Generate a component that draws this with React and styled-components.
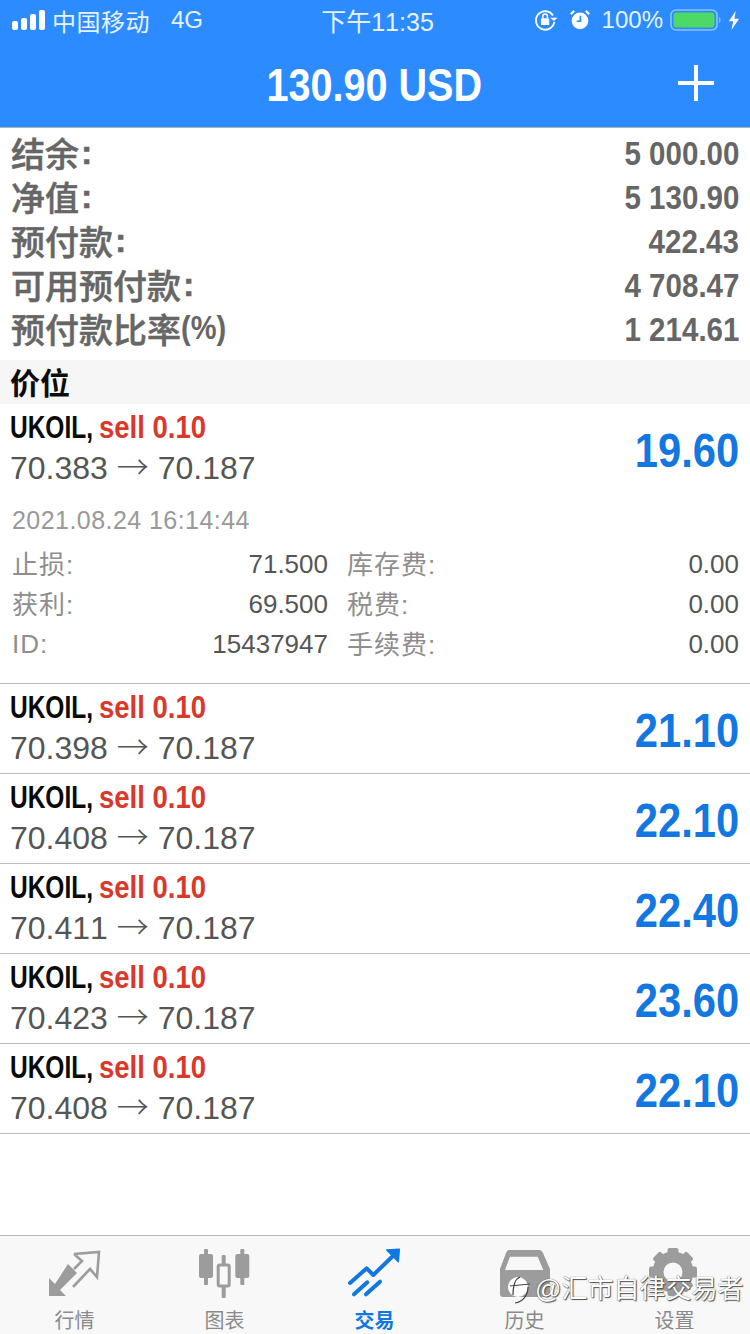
import React from 'react';
import styled, { createGlobalStyle } from 'styled-components';

const GlobalStyle = createGlobalStyle`
  html, body {
    margin: 0;
    padding: 0;
    background: #fff;
  }
  body {
    font-family: "Liberation Sans", "Noto Sans CJK SC", sans-serif;
  }
`;

const Page = styled.div`
  position: relative;
  width: 750px;
  height: 1334px;
  overflow: hidden;
  display: flex;
  flex-direction: column;
  background: #fff;
`;

const Header = styled.header`
  height: 128px;
  background: #2c8cff;
  color: #fff;
  flex: none;
  border-bottom: 1px solid #b4b4b4;
  box-sizing: border-box;
`;

const StatusBar = styled.div`
  height: 40px;
  display: grid;
  grid-template-columns: 1fr auto 1fr;
  align-items: center;
  padding: 0 10px 0 12px;
  font-size: 24px;
  color: #e6f1ff;
`;

const StatusLeft = styled.div`
  display: flex;
  align-items: center;
`;

const Carrier = styled.span`
  margin-left: 7px;
  letter-spacing: 0.5px;
`;

const Network = styled.span`
  margin-left: 21px;
`;

const Clock = styled.span`
  font-size: 25px;
  font-kerning: none;
  margin-left: 3px;
`;

const StatusRight = styled.div`
  display: flex;
  align-items: center;
  justify-content: flex-end;
`;

const Percent = styled.span`
  margin: 0 7px 0 12px;
`;

const TitleBar = styled.div`
  height: 87px;
  position: relative;
  display: flex;
  align-items: center;
  justify-content: center;
`;

const Title = styled.div`
  font-size: 46px;
  font-weight: 700;
  transform: scaleX(0.86);
  margin: 2px 2px 0 0;
`;

const AddButton = styled.div`
  position: absolute;
  right: 36px;
  top: 25px;
  width: 36px;
  height: 36px;
  &::before, &::after {
    content: "";
    position: absolute;
    background: #fff;
  }
  &::before { left: 0; right: 0; top: 16px; height: 4px; }
  &::after { top: 0; bottom: 0; left: 16px; width: 4px; }
`;

const Summary = styled.section`
  padding: 4px 11px 8px 11px;
  flex: none;
`;

const SummaryRow = styled.div`
  height: 44px;
  display: flex;
  align-items: center;
  justify-content: space-between;
  color: #666;
`;

const SummaryLabel = styled.span`
  display: flex;
  align-items: center;
  font-size: 34px;
  font-weight: 500;
  -webkit-text-stroke: 0.5px #666;
  margin-bottom: 4px;
`;

const Colon = styled.span`
  font-weight: 700;
  margin-left: 2px;
`;

const Percentage = styled.span`
  display: inline-block;
  width: 45px;
  font-size: 33px;
  font-weight: 700;
  -webkit-text-stroke: 0;
  transform: scaleX(0.88);
  transform-origin: left center;
`;

const SummaryValue = styled.span`
  display: inline-block;
  font-weight: 700;
  transform: scaleX(0.895);
  transform-origin: right center;
  font-size: 33px;
`;

const SectionHead = styled.div`
  height: 44px;
  box-sizing: border-box;
  background: #f6f6f6;
  display: flex;
  align-items: center;
  padding: 0 0 2px 10px;
  font-size: 30px;
  font-weight: 700;
  color: #0c0c0c;
  flex: none;
`;

const Position = styled.div`
  height: 90px;
  box-sizing: border-box;
  padding: 3px 11px 0 10px;
  display: flex;
  justify-content: space-between;
  align-items: center;
  border-bottom: 1px solid ${p => (p.$open ? 'transparent' : '#bcbcbc')};
  flex: none;
`;

const PositionInfo = styled.div`
  display: flex;
  flex-direction: column;
  gap: 4px;
  margin-top: -5px;
`;

const Symbol = styled.div`
  display: flex;
  font-size: 31px;
  line-height: 36px;
  font-weight: 700;
  white-space: nowrap;
`;

const SymbolName = styled.span`
  display: inline-block;
  width: 89px;
  color: #0a0a0a;
  transform: scaleX(0.79);
  transform-origin: left center;
`;

const Side = styled.span`
  display: inline-block;
  color: #d9392b;
  transform: scaleX(0.887);
  transform-origin: left center;
`;

const Prices = styled.div`
  font-size: 32px;
  line-height: 36px;
  color: #555;
  font-kerning: none;
  white-space: nowrap;
`;

const Arrow = styled.span`
  font-family: "Noto Sans CJK SC", sans-serif;
  font-weight: 300;
  line-height: 0;
`;

const Profit = styled.div`
  font-size: 48px;
  font-weight: 700;
  color: #1277e1;
  transform: scaleX(0.868);
  transform-origin: right center;
  margin-top: 0;
`;

const Details = styled.div`
  height: 194px;
  box-sizing: border-box;
  padding: 15px 11px 0 12px;
  border-bottom: 1px solid #bcbcbc;
  margin-top: -4px;
  flex: none;
`;

const DateLine = styled.div`
  font-size: 25px;
  line-height: 30px;
  color: #999;
  letter-spacing: 0.45px;
  margin-bottom: 9px;
`;

const DetailGrid = styled.div`
  display: grid;
  grid-template-columns: 316px 1fr;
  grid-auto-rows: 40px;
  column-gap: 19px;
`;

const DetailCell = styled.div`
  display: flex;
  align-items: center;
  justify-content: space-between;
  font-size: 26px;
`;

const DetailLabel = styled.span`
  color: #8e8e8e;
  letter-spacing: 1px;
  margin-bottom: ${p => (p.$latin ? '0' : '4px')};
`;

const DetailValue = styled.span`
  color: #555;
`;

const Spacer = styled.div`
  flex: 1;
`;

const TabBar = styled.nav`
  height: 99px;
  flex: none;
  box-sizing: border-box;
  border-top: 1px solid #b9b9b9;
  background: #f8f8f8;
  display: grid;
  grid-template-columns: repeat(5, 1fr);
`;

const Tab = styled.div`
  display: flex;
  flex-direction: column;
  align-items: center;
  font-size: 20px;
  font-weight: ${p => (p.$active ? 700 : 400)};
`;

const TabIcon = styled.svg`
  width: 60px;
  height: 60px;
  margin-top: 8px;
  flex: none;
`;

const TabLabel = styled.span`
  line-height: 24px;
  margin: 5px 1px 0 0;
  color: ${p => (p.$active ? '#1277e1' : '#8a8a8a')};
`;

const Watermark = styled.div`
  position: absolute;
  left: 505px;
  top: 1269px;
  display: flex;
  align-items: center;
  font-size: 26px;
  line-height: 36px;
  color: #fff;
  text-shadow: 0 0 1px #333, 1px 1px 1px #555;
  white-space: nowrap;
`;

const WatermarkLogo = styled.svg`
  width: 30px;
  height: 40px;
  flex: none;
`;

const SignalBars = () => (
  <svg width="33" height="22" viewBox="0 0 33 22" fill="#fff">
    <rect x="0" y="12" width="6" height="9" rx="2" />
    <rect x="9" y="9" width="6" height="12" rx="2" />
    <rect x="18" y="5" width="6" height="16" rx="2" />
    <rect x="27" y="1" width="6" height="20" rx="2" />
  </svg>
);

const RotationLock = () => (
  <svg width="24" height="24" viewBox="0 0 26 26" fill="none" stroke="#fff">
    <path d="M22 15a10 10 0 1 1-1.500-7" strokeWidth="2" />
    <path d="M25.500 10.500l-4 3.500-4-3.500z" fill="#fff" stroke="none" />
    <rect x="7.500" y="11" width="9" height="7.500" rx="1" fill="#fff" stroke="none" />
    <path d="M9.500 11V9a2.500 2.500 0 0 1 5 0v2" strokeWidth="1.600" />
  </svg>
);

const Alarm = () => (
  <svg width="20" height="22" viewBox="0 0 24 26" style={{ marginLeft: 12 }}>
    <circle cx="12" cy="14" r="10" fill="#fff" />
    <path d="M12.500 8v6.500H8" fill="none" stroke="#2c8cff" strokeWidth="2" />
    <path d="M1 6l4-4M23 6l-4-4" stroke="#fff" strokeWidth="2.600" />
  </svg>
);

const Battery = () => (
  <svg width="52" height="24" viewBox="0 0 52 24">
    <rect x="1" y="2" width="46" height="20" rx="5" fill="none" stroke="#8cc1ff" strokeWidth="1.600" />
    <rect x="3.500" y="4.500" width="41" height="15" rx="3" fill="#4cd964" />
    <path d="M49 9c2 .5 2 5.500 0 6z" fill="#8cc1ff" />
  </svg>
);

const Bolt = () => (
  <svg width="12" height="19" viewBox="0 0 14 22" style={{ marginLeft: 6 }}>
    <path d="M9 0L1 12h5l-2 10 9-13H7.500z" fill="#fff" />
  </svg>
);

const MarketIcon = () => (
  <TabIcon viewBox="0 0 60 60">
    <path d="M4 34V52H21L15 46 32 29 23 20 10 40z" fill="#9c9c9c" />
    <path d="M29 10L54 8 52 33 45 25 28 43M29 10L37 17 29 25" fill="none" stroke="#9c9c9c" strokeWidth="2.600" />
  </TabIcon>
);

const Candle = ({ x, top, bottom, wickTop, wickBottom, hollow }) => (
  <>
    <rect x={x - 2} y={wickTop} width="4" height={wickBottom - wickTop} rx="1" fill="#9c9c9c" />
    {hollow
      ? <rect x={x - 5.5} y={top} width="11" height={bottom - top} rx="1.500" fill="#f8f8f8" stroke="#9c9c9c" strokeWidth="3" />
      : <rect x={x - 7} y={top} width="14" height={bottom - top} rx="2" fill="#9c9c9c" />}
  </>
);

const ChartIcon = () => (
  <TabIcon viewBox="0 0 60 60">
    <Candle x={11} top={10} bottom={34} wickTop={5} wickBottom={41} />
    <Candle x={28.700} top={21} bottom={42} wickTop={11} wickBottom={54} hollow />
    <Candle x={47.300} top={10} bottom={34} wickTop={5} wickBottom={41} />
  </TabIcon>
);

const TradeIcon = () => (
  <TabIcon viewBox="0 0 60 60">
    <g fill="none" stroke="#1277e1" strokeWidth="4" strokeLinecap="round" strokeLinejoin="round">
      <path d="M5 39L21.700 24.300 28.300 31 50 10" />
      <path d="M9 50.300L22.300 38.300" />
      <path d="M21 50.300L35 37.700" />
    </g>
    <path d="M41.700 6L54.300 5.300 53.300 17.700z" fill="#1277e1" stroke="#1277e1" strokeWidth="1.500" strokeLinejoin="round" />
  </TabIcon>
);

const HistoryIcon = () => (
  <TabIcon viewBox="0 0 60 60">
    <path d="M14 6H44C46 6 47 7 48 9L55 25V50C55 52 54 53 52 53H8C6 53 5 52 5 50V25L11 9C12 7 12.500 6 14 6z" fill="#9c9c9c" />
    <path d="M15 12.700H42.700L48.300 26H10z" fill="#f8f8f8" />
  </TabIcon>
);

const GearIcon = () => {
  const teeth = [0, 45, 90, 135, 180, 225, 270, 315];
  return (
    <TabIcon viewBox="0 0 60 60">
      {teeth.map(a => (
        <rect key={a} x="22.500" y="4" width="11" height="12" rx="2" fill="#9c9c9c" transform={`rotate(${a} 28 28)`} />
      ))}
      <circle cx="28" cy="28" r="15" fill="none" stroke="#9c9c9c" strokeWidth="11" />
    </TabIcon>
  );
};

const summary = [
  ['结余', '5 000.00'],
  ['净值', '5 130.90'],
  ['预付款', '422.43'],
  ['可用预付款', '4 708.47'],
  ['预付款比率', '1 214.61', true],
];

const details = [
  ['止损:', '71.500', '库存费:', '0.00'],
  ['获利:', '69.500', '税费:', '0.00'],
  ['ID:', '15437947', '手续费:', '0.00'],
];

const positions = [
  ['70.398', '21.10'],
  ['70.408', '22.10'],
  ['70.411', '22.40'],
  ['70.423', '23.60'],
  ['70.408', '22.10'],
];

const tabs = [
  ['行情', MarketIcon],
  ['图表', ChartIcon],
  ['交易', TradeIcon, true],
  ['历史', HistoryIcon],
  ['设置', GearIcon],
];

const PositionRow = ({ open, from, profit }) => (
  <Position $open={open}>
    <PositionInfo>
      <Symbol>
        <SymbolName>UKOIL,</SymbolName>
        <Side>sell 0.10</Side>
      </Symbol>
      <Prices>{from} <Arrow>→</Arrow> 70.187</Prices>
    </PositionInfo>
    <Profit>{profit}</Profit>
  </Position>
);

export default function App() {
  return (
    <Page>
      <GlobalStyle />
      <Header>
        <StatusBar>
          <StatusLeft>
            <SignalBars />
            <Carrier>中国移动</Carrier>
            <Network>4G</Network>
          </StatusLeft>
          <Clock>下午11:35</Clock>
          <StatusRight>
            <RotationLock />
            <Alarm />
            <Percent>100%</Percent>
            <Battery />
            <Bolt />
          </StatusRight>
        </StatusBar>
        <TitleBar>
          <Title>130.90 USD</Title>
          <AddButton />
        </TitleBar>
      </Header>
      <Summary>
        {summary.map(([label, value, ratio]) => (
          <SummaryRow key={label}>
            <SummaryLabel>
              {label}
              {ratio ? <Percentage>(%)</Percentage> : <Colon>:</Colon>}
            </SummaryLabel>
            <SummaryValue>{value}</SummaryValue>
          </SummaryRow>
        ))}
      </Summary>
      <SectionHead>价位</SectionHead>
      <PositionRow open from="70.383" profit="19.60" />
      <Details>
        <DateLine>2021.08.24 16:14:44</DateLine>
        <DetailGrid>
          {details.map(([l1, v1, l2, v2]) => (
            <React.Fragment key={l1}>
              <DetailCell>
                <DetailLabel $latin={l1 === 'ID:'}>{l1}</DetailLabel>
                <DetailValue>{v1}</DetailValue>
              </DetailCell>
              <DetailCell>
                <DetailLabel>{l2}</DetailLabel>
                <DetailValue>{v2}</DetailValue>
              </DetailCell>
            </React.Fragment>
          ))}
        </DetailGrid>
      </Details>
      {positions.map(([from, profit], i) => (
        <PositionRow key={i} from={from} profit={profit} />
      ))}
      <Spacer />
      <TabBar>
        {tabs.map(([label, Icon, active]) => (
          <Tab key={label} $active={active}>
            <Icon />
            <TabLabel $active={active}>{label}</TabLabel>
          </Tab>
        ))}
      </TabBar>
      <Watermark>
        <WatermarkLogo viewBox="0 0 30 40">
          <circle cx="13" cy="18" r="10" fill="#fff" />
          <path d="M15 8C10 10 8 15 8 26M5 17L25 15M23 18C23 26 18 33 10 34" fill="none" stroke="#444" strokeWidth="1.200" />
        </WatermarkLogo>
        <span>@汇市自律交易者</span>
      </Watermark>
    </Page>
  );
}
